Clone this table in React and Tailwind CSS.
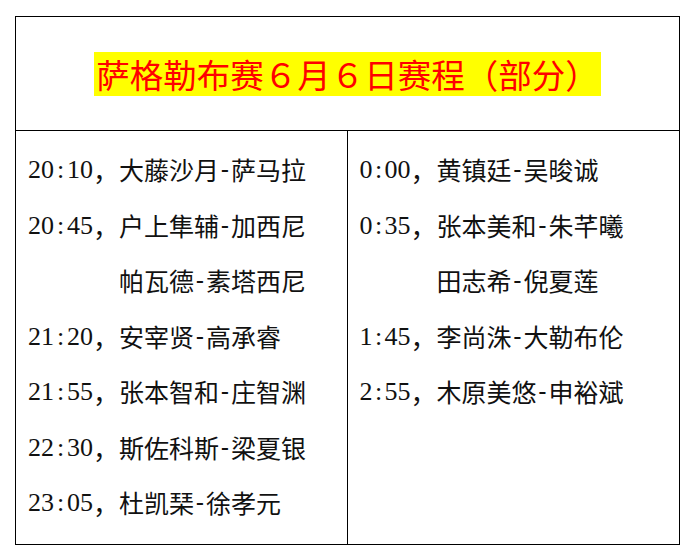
import React from "react";

const left = [
  ["20:10", "大藤沙月", "萨马拉"],
  ["20:45", "户上隼辅", "加西尼"],
  ["", "帕瓦德", "素塔西尼"],
  ["21:20", "安宰贤", "高承睿"],
  ["21:55", "张本智和", "庄智渊"],
  ["22:30", "斯佐科斯", "梁夏银"],
  ["23:05", "杜凯琹", "徐孝元"],
];

const right = [
  ["0:00", "黄镇廷", "吴晙诚"],
  ["0:35", "张本美和", "朱芊曦"],
  ["", "田志希", "倪夏莲"],
  ["1:45", "李尚洙", "大勒布伦"],
  ["2:55", "木原美悠", "申裕斌"],
];

function Row({ time, a, b, w }) {
  return (
    <div className="flex items-center h-[55.5px] whitespace-nowrap">
      <span className={`${w} shrink-0 flex items-center`}>
        {time &&
          time.split("").map((c, i) => (
            <span
              key={i}
              className="inline-block w-[13px] text-center text-[26px] font-['Liberation_Serif',serif]"
            >
              {c}
            </span>
          ))}
        {time && (
          <span className="inline-block text-[26px] font-['Noto_Sans_CJK_SC',sans-serif]">，</span>
        )}
      </span>
      <span className="text-[25px] font-['Noto_Sans_CJK_SC',sans-serif] flex items-center">
        {a}
        <span className="inline-block w-[12px] text-center font-['Liberation_Sans',sans-serif]">-</span>
        {b}
      </span>
    </div>
  );
}

export default function App() {
  return (
    <div className="w-[695px] h-[555px] bg-white pt-[16px] pl-[15px] text-[#111]">
      <div className="w-[665px] h-[529px] border border-black flex flex-col">
        <div className="h-[114px] shrink-0 border-b border-black flex items-center justify-center">
          <span className="inline-block h-[44px] leading-[44px] bg-[#ffff00] text-[#ff0000] text-[33.5px] px-[2px] font-['Noto_Sans_CJK_SC',sans-serif] whitespace-nowrap">
            萨格勒布赛６月６日赛程（部分）
          </span>
        </div>
        <div className="flex-1 grid grid-cols-2">
          <div className="border-r border-black pl-[12px] pt-[11px]">
            {left.map((r, i) => (
              <Row key={i} time={r[0]} a={r[1]} b={r[2]} w="w-[91px]" />
            ))}
          </div>
          <div className="pl-[12px] pt-[11px]">
            {right.map((r, i) => (
              <Row key={i} time={r[0]} a={r[1]} b={r[2]} w="w-[77px]" />
            ))}
          </div>
        </div>
      </div>
    </div>
  );
}
